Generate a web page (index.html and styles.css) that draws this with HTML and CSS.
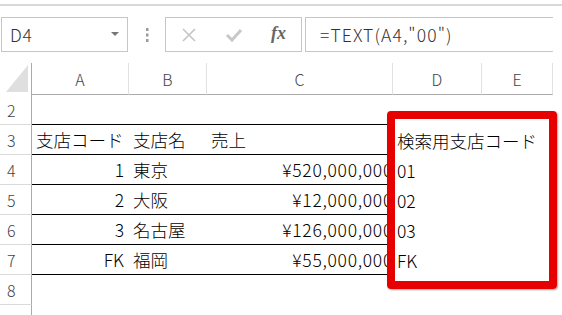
FILE: index.html
```html
<!DOCTYPE html>
<html lang="ja">
<head>
    <meta charset="UTF-8">
    <title>TEXT関数</title>
    <link rel="stylesheet" href="styles.css">
</head>
<body>
    <div class="topbar"></div>

    <!-- 数式バー -->
    <div class="formula-bar">
        <div class="name-box">
            <span>D4</span>
            <span class="caret"></span>
        </div>
        <div class="grip">
            <svg width="4" height="14" viewBox="0 0 4 14"><rect x="1" y="0" width="2.5" height="3" fill="#9a9a9a"/><rect x="1" y="5.5" width="2.5" height="3" fill="#9a9a9a"/><rect x="1" y="11" width="2.5" height="3" fill="#9a9a9a"/></svg>
        </div>
        <div class="fx-buttons">
            <svg width="16" height="16" viewBox="0 0 16 16"><path d="M2 2 L14 14 M14 2 L2 14" stroke="#c4c4c4" stroke-width="1.6" fill="none"/></svg>
            <svg width="18" height="16" viewBox="0 0 18 16"><path d="M2 8 L7 13 L16 3" stroke="#c8c8c8" stroke-width="3" fill="none"/></svg>
            <span class="fx">fx</span>
        </div>
        <div class="formula-input">=TEXT(A4,"00")</div>
    </div>

    <!-- シート -->
    <div class="sheet">
        <div class="corner"><svg width="22" height="27" viewBox="0 0 22 27"><polygon points="0,27 22,27 22,0" fill="#dfdfdf"/></svg></div>
        <div class="ch">A</div>
        <div class="ch">B</div>
        <div class="ch">C</div>
        <div class="ch">D</div>
        <div class="ch">E</div>

        <div class="rh">2</div>
        <div class="cell b"></div>
        <div class="cell b"></div>
        <div class="cell b"></div>
        <div class="cell"></div>
        <div class="cell"></div>

        <div class="rh">3</div>
        <div class="cell b">支店コード</div>
        <div class="cell b">支店名</div>
        <div class="cell b">売上</div>
        <div class="cell">検索用支店コード</div>
        <div class="cell"></div>

        <div class="rh">4</div>
        <div class="cell b num">1</div>
        <div class="cell b">東京</div>
        <div class="cell b num money">¥520,000,000</div>
        <div class="cell">01</div>
        <div class="cell"></div>

        <div class="rh">5</div>
        <div class="cell b num">2</div>
        <div class="cell b">大阪</div>
        <div class="cell b num money">¥12,000,000</div>
        <div class="cell">02</div>
        <div class="cell"></div>

        <div class="rh">6</div>
        <div class="cell b num">3</div>
        <div class="cell b">名古屋</div>
        <div class="cell b num money">¥126,000,000</div>
        <div class="cell">03</div>
        <div class="cell"></div>

        <div class="rh">7</div>
        <div class="cell b num">FK</div>
        <div class="cell b">福岡</div>
        <div class="cell b num money">¥55,000,000</div>
        <div class="cell">FK</div>
        <div class="cell"></div>

        <div class="rh">8</div>
        <div class="cell"></div>
        <div class="cell"></div>
        <div class="cell"></div>
        <div class="cell"></div>
        <div class="cell"></div>

        <div class="rh">9</div>
        <div class="cell"></div>
        <div class="cell"></div>
        <div class="cell"></div>
        <div class="cell"></div>
        <div class="cell"></div>
    </div>

    <!-- 強調枠 -->
    <div class="highlight"></div>
</body>
</html>
```

FILE: styles.css
```css
body {
    margin: 0;
    background: #fff;
    font-family: "Noto Sans CJK JP", sans-serif;
    font-weight: 300;
    width: 562px;
    height: 315px;
    overflow: hidden;
    position: relative;
    color: #000;
}
.topbar {
    height: 4px;
    border-bottom: 2px solid #d8d8d8;
}
.formula-bar {
    display: flex;
    align-items: center;
    height: 35px;
    margin-top: 11px;
    width: 553px;
}
.name-box {
    margin-left: 1px;
    width: 127px;
    height: 35px;
    border: 1px solid #c6c6c6;
    box-sizing: border-box;
    display: flex;
    align-items: center;
    justify-content: space-between;
    padding: 0 8px 0 8px;
    font-size: 17.5px;
    letter-spacing: 0.8px;
    color: #333;
}
.caret {
    width: 0;
    height: 0;
    border-left: 4px solid transparent;
    border-right: 4px solid transparent;
    border-top: 4px solid #777;
    margin-top: -2px;
}
.grip {
    width: 37px;
    display: flex;
    justify-content: center;
    padding-top: 1px;
}
.fx-buttons {
    width: 137px;
    height: 35px;
    border: 1px solid #c6c6c6;
    box-sizing: border-box;
    display: grid;
    grid-template-columns: repeat(3, 1fr);
    justify-items: center;
    align-items: center;
}
.fx {
    font-family: "Liberation Serif", serif;
    font-style: italic;
    font-weight: bold;
    font-size: 18px;
    color: #666;
    margin-top: -3px;
}
.formula-input {
    margin-left: 3px;
    flex: 1;
    height: 35px;
    border: 1px solid #c6c6c6;
    border-right: none;
    box-sizing: border-box;
    padding-left: 14px;
    display: flex;
    align-items: center;
    font-size: 17.5px;
    letter-spacing: 1.1px;
    color: #333;
}
.sheet {
    margin-top: 11px;
    width: 553px;
    display: grid;
    grid-template-columns: 32px 97px 78px 186px 89px 71px;
    grid-template-rows: 32px repeat(8, 30px);
}
.corner {
    border-right: 1px solid #ababab;
    box-sizing: border-box;
    display: flex;
    align-items: flex-end;
    justify-content: flex-end;
    padding: 0 3px 3px 0;
}
.ch {
    border-bottom: 1px solid #ababab;
    border-right: 1px solid #e1e1e1;
    box-sizing: border-box;
    display: flex;
    align-items: center;
    justify-content: center;
    font-size: 16px;
    color: #444;
}
.rh {
    border-right: 1px solid #ababab;
    border-bottom: 1px solid #dadada;
    box-sizing: border-box;
    display: flex;
    align-items: center;
    padding-left: 7px;
    font-size: 16px;
    color: #444;
}
.cell {
    box-sizing: border-box;
    display: flex;
    align-items: center;
    padding: 0 4px;
    font-size: 17.5px;
    white-space: nowrap;
}
.cell.b {
    border-bottom: 1px solid #000;
}
.cell.num {
    justify-content: flex-end;
    padding-right: 5px;
}
.cell.money {
    padding-right: 0;
    letter-spacing: 0.7px;
}
.highlight {
    position: absolute;
    left: 387px;
    top: 111px;
    width: 170px;
    height: 178px;
    border: 8px solid #e60000;
    border-radius: 4px;
    box-sizing: border-box;
    box-shadow: 1px 1px 2px rgba(0, 0, 0, 0.35);
}
```
